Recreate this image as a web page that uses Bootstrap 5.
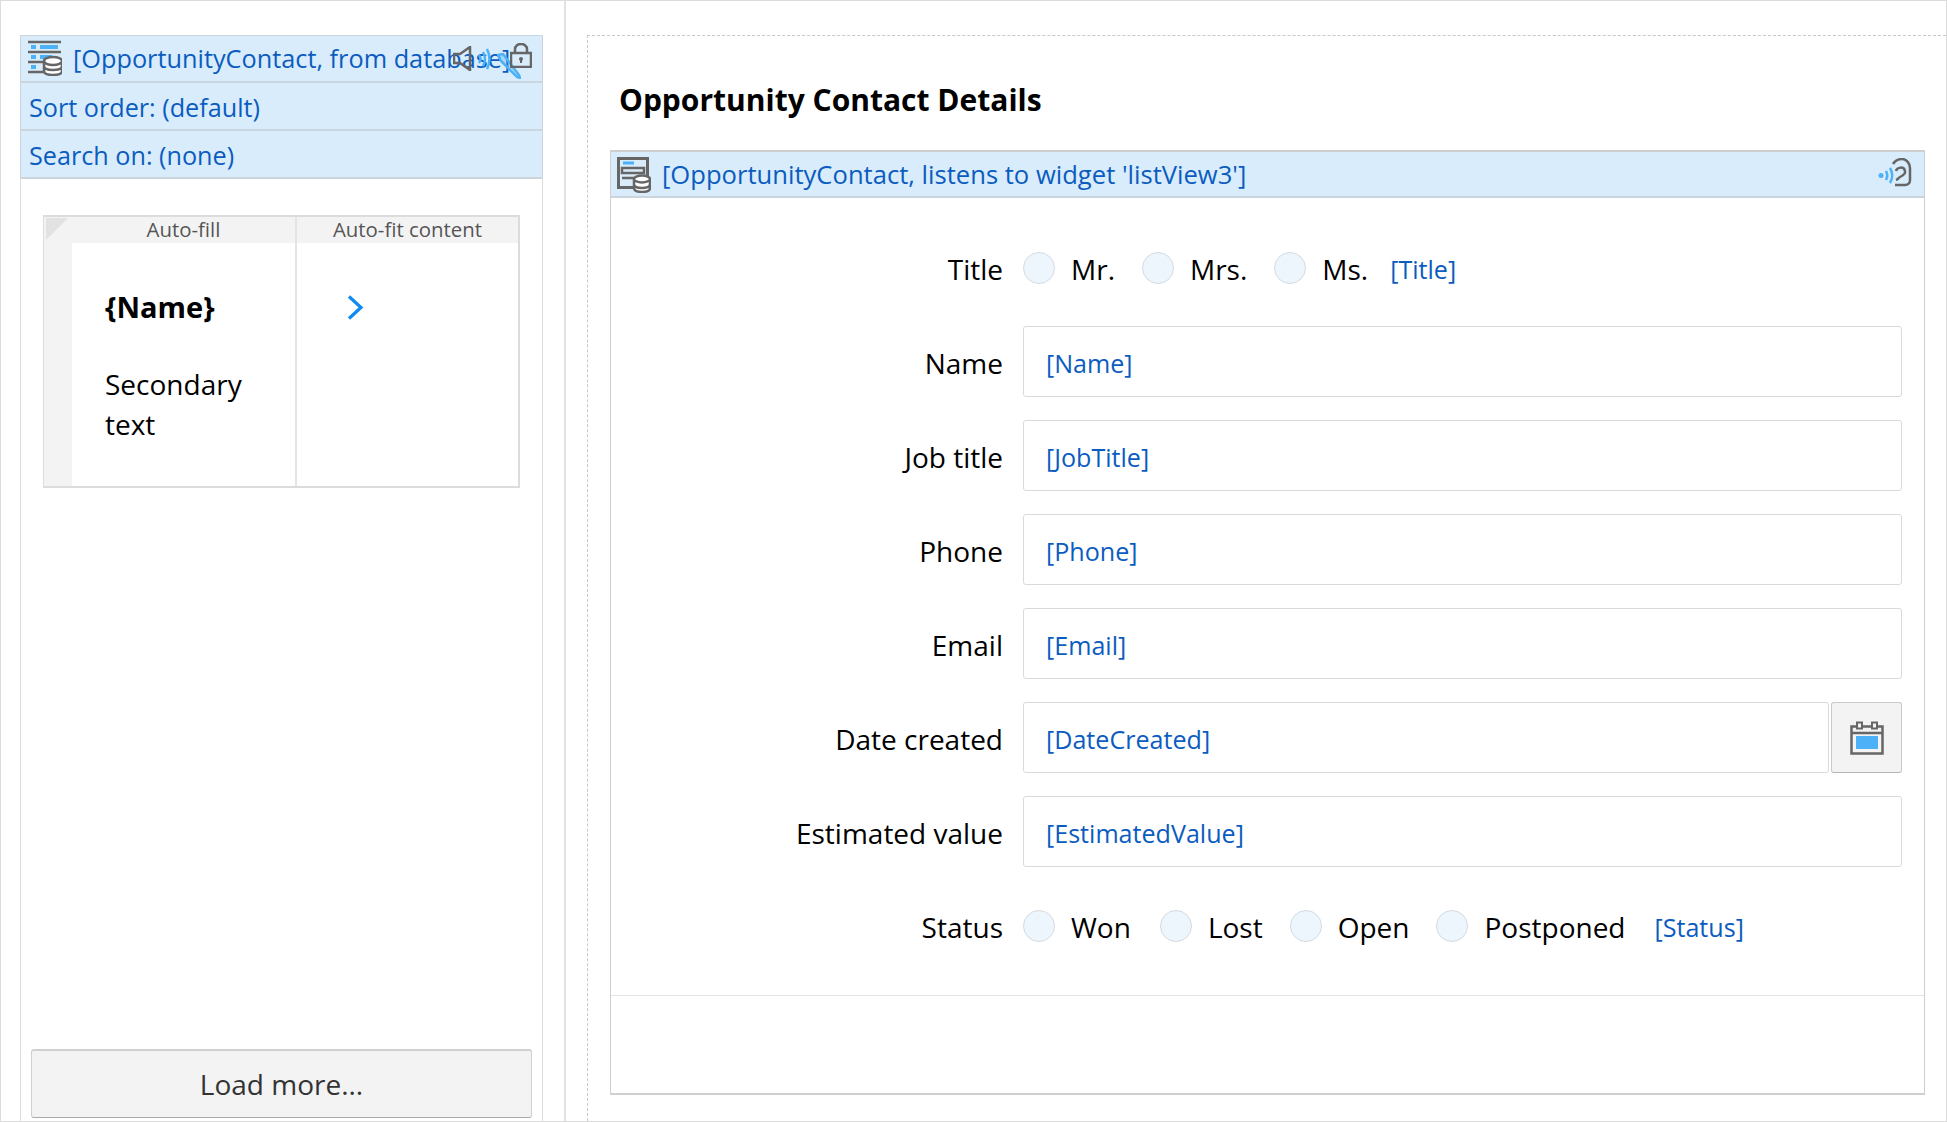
<!DOCTYPE html>
<html lang="en"><head><meta charset="utf-8"><title>Opportunity Contact Details</title>
<link rel="stylesheet" href="https://cdn.jsdelivr.net/npm/bootstrap@5.3.0/dist/css/bootstrap.min.css">
<style>
html,body{height:100%;overflow:hidden}
body{font-family:"Open Sans","Noto Sans",sans-serif;font-size:28px;color:#000;background:#fff}
.frame{height:1122px;border:1px solid #dcdcdc}
.pane-l{width:565px;flex:none;padding:34px 21px 0 19px;border-right:2px solid #e2e2e2}
.pane-r{padding:34px 0 0 21px;min-width:0}
.listpane{height:100%;border-left:1px solid #dcdcdc;border-right:1px solid #dcdcdc}
.dbhead{height:48px;background:#d9ecfb;color:#0b5cbf;font-size:25.2px;border:1px solid #cdd5dc;border-bottom-width:2px;margin:0 -1px;padding-left:8px;line-height:49px;white-space:nowrap;position:relative}
.dbhead+.dbhead{border-top:0;height:48px}
.dbhead.first{padding-left:7px;line-height:45px;font-size:25.3px}
.dbico{width:34px;height:36px;flex:none;margin:4px 11px 0 0}
.ovl{position:absolute}
.grid-wrap{margin:36px 0 0 22px;width:477px;height:273px;border:2px solid #dcdcdc;border-width:2px 2px 2px 1px}
.gcol{position:relative;height:100%}
.gcol1{width:253px;flex:none;border-right:2px solid #e4e4e4;padding-left:28px}
.ghead{height:26px;background:#f3f3f3;color:#555;font-size:20.4px;line-height:25px;text-align:center}
.gcol1 .ghead{margin-left:-28px;padding-left:28px}
.gstrip{position:absolute;left:0;top:0;bottom:0;width:28px;background:#f3f3f3}
.gtri{position:absolute;z-index:1;left:2px;top:1px;width:0;height:0;border-top:22px solid #e2e2e2;border-right:22px solid transparent}
.gname{font-weight:700;font-size:29px;margin:0 0 0 33px;padding-top:44px;line-height:40px}
.gsec{margin:37px 0 0 33px;line-height:40px;width:170px;font-size:28px}
.chev{display:block;margin:52px 0 0 50px}
.loadbtn{margin:auto 10px 3px 10px;height:69px;width:501px;background:#f3f3f3;border:1px solid #d0d0d0;border-top:2px solid #d0d0d0;border-bottom:1px solid #aaa;border-radius:3px;font-size:28px;color:#333;padding:0}
.dashbox{height:100%;border-top:1px dashed #c8c8c8;border-left:1px dashed #c8c8c8;padding-left:22px}
.ttl{height:114px;margin:0;padding:44px 0 0 9px;font-size:30px;font-weight:700;line-height:40px;color:#000}
.fbox{height:945px;width:1315px;border:1px solid #cfcfcf;border-top-width:2px;border-bottom-width:2px}
.fbox .dbhead{margin:0;border-left:0;border-right:0;border-top:0;padding-left:6px;height:46px;line-height:46px;font-size:25.6px}
.fbox .dbico{margin-top:5px}
.fbody{padding:34px 22px 0 0;gap:23px}
.frow{height:71px}
.flab{width:392px;flex:none;text-align:right;margin-right:20px;padding-top:2px}
.finput{height:71px;background:#fff;border:1px solid #dadada;border-radius:3px;color:#0b5cbf;padding:2px 0 0 22px;font-size:25.1px;line-height:69px;flex:1 1 0;min-width:0}
.calbtn{width:71px;height:71px;margin-left:2px;flex:none;background:#f3f3f3;border:1px solid #c9c9c9;border-bottom-color:#b5b5b5;border-radius:3px;padding:0}
.rdo{display:inline-block;width:32px;height:32px;border-radius:50%;background:#edf5fd;border:1px solid #d5dbe1;margin-right:16px;flex:none}
.ropt{margin-right:27px;padding-top:2px}
.ropt.tight{margin-right:22px}
.ropt.wide{margin-right:29px}
.bind{color:#0b5cbf;font-size:25.1px;padding-top:4px}
.ffoot{height:98px;margin:auto -22px 0 0;border-top:1px solid #e4e4e4}
</style></head><body>
<div class="frame d-flex">
 <div class="pane-l">
  <div class="listpane d-flex flex-column">
   <div class="dbhead first d-flex">
    <svg class="dbico" viewBox="0 0 34 36" fill="none"><path d="M0 2h33M0 12h33M0 22h22M0 32h18" stroke="#666" stroke-width="2.500"/><path d="M3 5h5v4H3zM12 5h18v4H12zM3 15h5v4H3zM12 15h12v4H12zM3 25h5v4H3z" fill="#4db1f7"/><path d="M16 21v10c0 2.500 4 4 9 4s9-1.500 9-4V21M16 26c0 2.500 4 4 9 4s9-1.500 9-4" fill="#fff" stroke="#666" stroke-width="2.500"/><ellipse cx="25" cy="21" rx="9" ry="4" fill="#fff" stroke="#666" stroke-width="2.500"/></svg>
    <span class="text-nowrap">[OpportunityContact, from database]</span>
    <svg class="ovl" viewBox="0 0 19 25" width="19" height="25" fill="none" style="left:432px;top:10px"><path d="M1 8h6L17 1v23L7 17H1z" stroke="#666" stroke-width="2.500"/></svg>
    <svg class="ovl" viewBox="0 0 16 24" width="16" height="24" fill="none" style="left:455px;top:11px"><path d="M3 8q3 4 0 8M7 5q4 7 0 14M11 2q5 10 0 20" stroke="#4db1f7" stroke-width="2.500"/></svg>
    <svg class="ovl" viewBox="0 0 24 26" width="24" height="26" fill="none" style="left:476px;top:17px"><path d="M1 2l5-1 16 21 1 3-3-1L4 8z" fill="#4db1f7" fill-opacity=".35" stroke="#4db1f7" stroke-width="2.500"/></svg>
    <svg class="ovl" viewBox="0 0 22 25" width="22" height="25" fill="none" style="left:489px;top:7px"><path d="M1 10h20v14H1zM5 10V6a6 5 0 0 1 12 0v4" stroke="#666" stroke-width="2.500"/><circle cx="11" cy="16" r="2" fill="#666"/><path d="M11 16v4" stroke="#666" stroke-width="2"/></svg>
   </div>
   <div class="dbhead">Sort order: (default)</div>
   <div class="dbhead">Search on: (none)</div>
   <div class="grid-wrap d-flex">
    <div class="gcol gcol1">
     <div class="gstrip"></div><div class="gtri"></div>
     <div class="ghead position-relative">Auto-fill</div>
     <div class="gname">{Name}</div>
     <div class="gsec">Secondary text</div>
    </div>
    <div class="gcol flex-grow-1">
     <div class="ghead">Auto-fit content</div>
     <svg class="chev" width="17" height="25" viewBox="0 0 17 25" fill="none"><path d="M2 1.500l12 11-12 11" stroke="#0d8bf2" stroke-width="3.200"/></svg>
    </div>
   </div>
   <button class="btn loadbtn" type="button">Load more...</button>
  </div>
 </div>
 <div class="pane-r flex-grow-1">
  <div class="dashbox d-flex flex-column">
   <h1 class="ttl">Opportunity Contact Details</h1>
   <div class="fbox d-flex flex-column">
    <div class="dbhead d-flex">
     <svg class="dbico" viewBox="0 0 34 36" fill="none"><path d="M1.500 1.500h29v29h-29z" stroke="#666" stroke-width="3"/><path d="M6 6h11" stroke="#4db1f7" stroke-width="3"/><path d="M5 11h22v5H5zM5 21h13" stroke="#666" stroke-width="2.500"/><path d="M17 22v9c0 2.500 3.500 4 8 4s8-1.500 8-4v-9M17 27c0 2.500 3.500 4 8 4s8-1.500 8-4" fill="#fff" stroke="#666" stroke-width="2.500"/><ellipse cx="25" cy="22" rx="8" ry="3.500" fill="#fff" stroke="#666" stroke-width="2.500"/></svg>
     <span>[OpportunityContact, listens to widget 'listView3']</span>
     <svg class="ovl" viewBox="0 0 35 29" width="35" height="29" fill="none" style="right:11px;top:6px"><circle cx="3" cy="17.500" r="2.500" fill="#4db1f7"/><path d="M8 13q2.500 4.500 0 9M12 10q4.500 7.500 0 15" stroke="#4db1f7" stroke-width="2.500"/><path d="M17 27h10c3 0 5-2 5-5V10c0-5-4-9-8-9-4 0-7 2-9 5" stroke="#666" stroke-width="2.500"/><path d="M18 13c1-4 8-5 9 0 1 3-3 5-5 6-2 1-1 2-4 3" stroke="#666" stroke-width="2.500"/></svg>
    </div>
    <div class="fbody d-flex flex-column flex-grow-1">
     <div class="frow d-flex align-items-center"><div class="flab">Title</div>
      <div class="d-flex align-items-center"><span class="rdo"></span><span class="ropt">Mr.</span><span class="rdo"></span><span class="ropt">Mrs.</span><span class="rdo"></span><span class="ropt tight">Ms.</span><span class="bind">[Title]</span></div></div>
     <div class="frow d-flex align-items-center"><div class="flab">Name</div><div class="finput">[Name]</div></div>
     <div class="frow d-flex align-items-center"><div class="flab">Job title</div><div class="finput">[JobTitle]</div></div>
     <div class="frow d-flex align-items-center"><div class="flab">Phone</div><div class="finput">[Phone]</div></div>
     <div class="frow d-flex align-items-center"><div class="flab">Email</div><div class="finput">[Email]</div></div>
     <div class="frow d-flex align-items-center"><div class="flab">Date created</div><div class="finput">[DateCreated]</div>
      <button class="btn calbtn d-flex align-items-center justify-content-center" type="button" aria-label="Calendar"><svg width="34" height="34" viewBox="0 0 34 34" fill="none"><path d="M1.500 5.500h31v27h-31zM1.500 12h31" stroke="#666" stroke-width="2.500"/><rect x="7" y="1.500" width="5" height="6" fill="#f3f3f3" stroke="#666" stroke-width="2"/><rect x="22" y="1.500" width="5" height="6" fill="#f3f3f3" stroke="#666" stroke-width="2"/><rect x="6" y="15" width="22" height="13" fill="#4db1f7"/></svg></button></div>
     <div class="frow d-flex align-items-center"><div class="flab">Estimated value</div><div class="finput">[EstimatedValue]</div></div>
     <div class="frow d-flex align-items-center"><div class="flab">Status</div>
      <div class="d-flex align-items-center"><span class="rdo"></span><span class="ropt wide">Won</span><span class="rdo"></span><span class="ropt">Lost</span><span class="rdo"></span><span class="ropt">Open</span><span class="rdo"></span><span class="ropt wide">Postponed</span><span class="bind">[Status]</span></div></div>
     <div class="ffoot"></div>
    </div>
   </div>
  </div>
 </div>
</div>
</body></html>
